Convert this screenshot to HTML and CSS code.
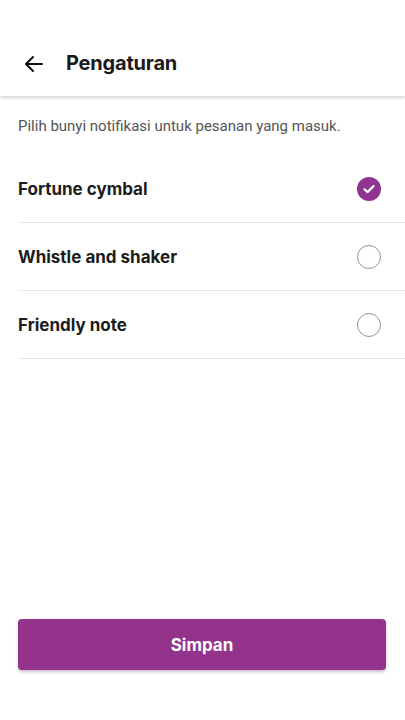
FILE: index.html
```html
<!DOCTYPE html>
<html lang="id">
<head>
  <meta charset="UTF-8">
  <title>Pengaturan</title>
  <meta name="viewport" content="width=device-width, initial-scale=1.0">
  <link rel="stylesheet" href="styles.css">
</head>
<body>
  <div class="app">
    <header class="topbar">
      <svg class="back" width="24" height="24" viewBox="0 0 24 24" aria-hidden="true">
        <path d="M20 12H4.5M11 5l-7 7 7 7" fill="none" stroke="#111" stroke-width="2" stroke-linecap="round" stroke-linejoin="round"/>
      </svg>
      <h1>Pengaturan</h1>
    </header>

    <p class="hint">Pilih bunyi notifikasi untuk pesanan yang masuk.</p>

    <ul class="sounds">
      <li class="sound">
        <span>Fortune cymbal</span>
        <span class="radio checked">
          <svg width="24" height="24" viewBox="0 0 24 24" aria-hidden="true">
            <circle cx="12" cy="12" r="12" fill="#8f3490"/>
            <path d="M7.5 12.3l3 2.8 6-6" fill="none" stroke="#fff" stroke-width="2.2" stroke-linecap="round" stroke-linejoin="round"/>
          </svg>
        </span>
      </li>
      <li class="sound">
        <span>Whistle and shaker</span>
        <span class="radio"></span>
      </li>
      <li class="sound">
        <span>Friendly note</span>
        <span class="radio"></span>
      </li>
    </ul>

    <div class="footer">
      <button class="save">Simpan</button>
    </div>
  </div>
</body>
</html>
```

FILE: styles.css
```css
body { margin: 0; background: #fff; color: #1c1c1c; font-family: Inter, "Noto Sans", sans-serif; }
.app { height: 720px; display: flex; flex-direction: column; }
.topbar { height: 96px; display: flex; align-items: center; gap: 20px; padding: 30px 22px 0; box-sizing: border-box; background: #fff; box-shadow: 0 2px 3px rgba(0,0,0,0.16); }
.topbar .back { flex: none; margin-top: 1px; }
.topbar h1 { margin: 0; font-size: 20px; font-weight: 700; letter-spacing: -0.2px; color: #1a1a1a; }
.hint { margin: 20px 0 0 18px; font-family: Roboto, sans-serif; font-size: 15px; color: #555; line-height: 20px; }
.sounds { list-style: none; margin: 19px 0 0 18px; padding: 0; }
.sound { height: 67px; display: flex; align-items: center; justify-content: space-between; padding-right: 24px; border-bottom: 1px solid #e8e8e8; font-size: 17px; font-weight: 700; color: #1c1c1c; }
.radio { width: 24px; height: 24px; box-sizing: border-box; border: 1px solid #9c8c9a; border-radius: 50%; }
.radio.checked { border: none; }
.radio svg { display: block; }
.footer { margin-top: auto; padding: 0 19px 50px 18px; }
.save { width: 100%; height: 51px; border: none; border-radius: 4px; background: #93338b; color: #fff; font-family: Inter, sans-serif; font-size: 17px; font-weight: 700; box-shadow: 0 2px 3px rgba(100,30,100,0.3); }
```
